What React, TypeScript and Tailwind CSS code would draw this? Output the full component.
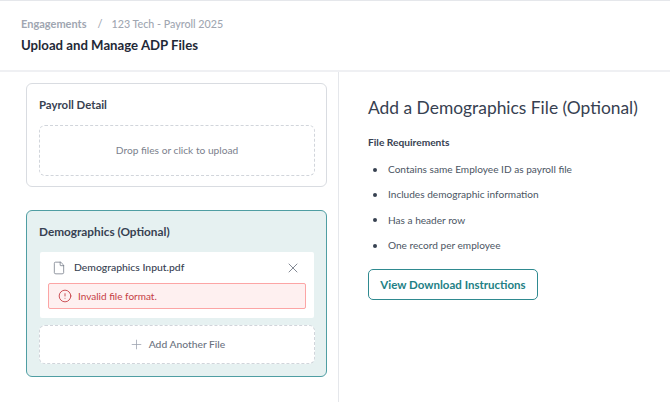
import { CircleAlert, File, Plus, X } from "lucide-react";

export default function App() {
  const items = [
    "Contains same Employee ID as payroll file",
    "Includes demographic information",
    "Has a header row",
    "One record per employee",
  ];
  return (
    <div className="w-[670px] h-[402px] overflow-hidden bg-white font-['Lato',sans-serif] flex flex-col">
      <header className="h-[72px] shrink-0 border-t border-b-2 border-t-[#e5e7eb] border-b-[#eff0f3] pl-[21px] pt-[15px]">
        <div className="flex items-center text-[11px] leading-[16px] font-bold text-[#a0a6b1]">
          <span>Engagements</span>
          <span className="ml-[11px] font-medium">/</span>
          <span className="ml-[9px] text-[10.7px] font-medium">123 Tech - Payroll 2025</span>
        </div>
        <h1 className="mt-[3px] text-[13.2px] leading-[20px] font-bold text-[#1f2937]">Upload and Manage ADP Files</h1>
      </header>
      <main className="flex flex-1 min-h-0">
        <section className="w-[339px] shrink-0 border-r border-[#e5e7eb] pl-[26px] pr-[11px] pt-[11px] flex flex-col gap-[23px]">
          <div className="h-[104px] rounded-[6px] border border-[#d9dce1] pl-[12px] pr-[11px] pt-[13px]">
            <h2 className="text-[11.4px] leading-[16px] font-bold text-[#374151]">Payroll Detail</h2>
            <div className="mt-[12px] h-[51px] rounded-[6px] border border-dashed border-[#d1d5db] flex items-center justify-center text-[10.2px] text-[#7b818d]">
              Drop files or click to upload
            </div>
          </div>
          <div className="h-[167px] rounded-[6px] border border-[#4f9ea3] bg-[#e6f1f1] pl-[12px] pr-[11px] pt-[13px]">
            <h2 className="text-[11.8px] leading-[16px] font-bold text-[#374151]">Demographics (Optional)</h2>
            <div className="mt-[12px] ml-px mr-px bg-white rounded-[2px] pl-[8px] pr-[8px] pt-[5px] pb-[9px]">
              <div className="flex items-center h-[22px] pl-[4px] pr-[5px]">
                <File className="w-[14px] h-[16px] text-[#6b7280]" strokeWidth={1.25} />
                <span className="ml-[8px] flex-1 text-[10.4px] font-medium text-[#374151]">Demographics Input.pdf</span>
                <X className="w-[16px] h-[16px] text-[#6b7280]" strokeWidth={1.25} />
              </div>
              <div className="mt-[4px] h-[26px] rounded-[2px] border border-[#fca5a5] bg-[#fef0f0] flex items-center pl-[9px] text-[10px] text-[#c53d44]">
                <CircleAlert className="w-[14px] h-[14px]" strokeWidth={1.5} />
                <span className="ml-[6px]">Invalid file format.</span>
              </div>
            </div>
            <div className="mt-[7px] h-[39px] rounded-[6px] border border-dashed border-[#d1d5db] bg-white flex items-center justify-center text-[10.3px] font-medium text-[#6b7280]">
              <Plus className="w-[15px] h-[15px] text-[#9ca3af]" strokeWidth={1.25} />
              <span className="ml-[5px]">Add Another File</span>
            </div>
          </div>
        </section>
        <section className="flex-1 pl-[29px] pt-[24px]">
          <h2 className="text-[17.4px] leading-[24px] text-[#374151]">Add a Demographics File (Optional)</h2>
          <h3 className="mt-[14px] text-[10.2px] leading-[16px] font-bold text-[#374151]">File Requirements</h3>
          <ul className="mt-[11.5px] flex flex-col gap-[9.4px]">
            {items.map((t) => (
              <li key={t} className="flex items-center h-[16px] text-[10.1px] text-[#4b5563]">
                <span className="ml-[5px] w-[4px] h-[4px] rounded-full bg-[#374151]" />
                <span className="ml-[11px]">{t}</span>
              </li>
            ))}
          </ul>
          <button className="mt-[15.5px] h-[31px] w-[170px] rounded-[5px] border border-[#2f8a90] text-[11.5px] font-bold text-[#237f85] flex items-center justify-center">
            View Download Instructions
          </button>
        </section>
      </main>
    </div>
  );
}
